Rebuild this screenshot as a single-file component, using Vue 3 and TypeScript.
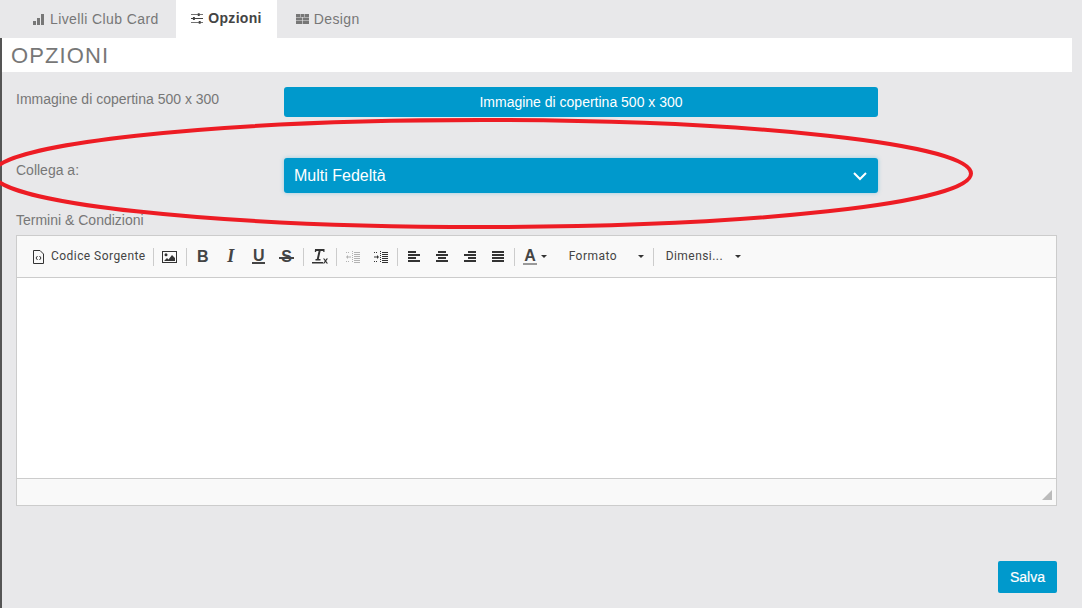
<script setup lang="ts">
</script>

<template>
  <div class="page">
    <nav class="tabs">
      <div class="tab first-tab">
        <svg width="13" height="11" viewBox="0 0 13 11"><path fill="#777" d="M1 7h3v4H1zM5 4h3v7H5zM9 0h3v11H9z" /></svg>
        <span>Livelli Club Card</span>
      </div>
      <div class="tab active">
        <svg width="13" height="11" viewBox="0 0 13 11"><path fill="#444" d="M0 1h7V0h2v1h4v1H9v1H7V2H0zM0 5h2V4h2v1h9v1H4v1H2V6H0zM0 9h8V8h2v1h3v1h-3v1H8v-1H0z" /></svg>
        <span>Opzioni</span>
      </div>
      <div class="tab last-tab">
        <svg width="13" height="10" viewBox="0 0 13 10"><path fill="#777" d="M0 0h4v3H0zM4.500 0h4v3h-4zM9 0h4v3H9zM0 3.600h6.200v2.800H0zM6.800 3.600H13v2.800H6.800zM0 7h6.200v3H0zM6.800 7H13v3H6.800z" /></svg>
        <span>Design</span>
      </div>
    </nav>

    <main class="panel">
      <h1 class="title">OPZIONI</h1>

      <div class="form">
        <svg class="ring" width="1000" height="116" viewBox="0 0 1000 116">
          <ellipse cx="491" cy="57.500" rx="489" ry="53.500" fill="none" stroke="#ed1c24" stroke-width="4" />
        </svg>

        <div class="row first">
          <label class="lbl">Immagine di copertina 500 x 300</label>
          <button class="cover">Immagine di copertina 500 x 300</button>
        </div>

        <div class="row second">
          <label class="lbl">Collega a:</label>
          <div class="select">
            <span>Multi Fedeltà</span>
            <svg width="14" height="9" viewBox="0 0 14 9"><path d="M1 1l6 6 6-6" fill="none" stroke="#fff" stroke-width="2" /></svg>
          </div>
        </div>

        <label class="lbl terms">Termini &amp; Condizioni</label>

        <section class="editor">
          <div class="toolbar">
            <span class="tb source">
              <svg width="11" height="14" viewBox="0 0 11 14"><path fill="none" stroke="#333" d="M.5.500h6.500l3.500 3.500v9.500H.5z" /><path fill="none" stroke="#333" d="M4.500 6L3 8l1.500 2M6.500 6L8 8l-1.500 2" /></svg>
              <span class="lift">Codice Sorgente</span>
            </span>
            <i class="sep"></i>
            <span class="tb ic">
              <svg width="15" height="12" viewBox="0 0 15 12"><path fill="#333" fill-rule="evenodd" d="M0 0h15v12H0zM1 1v10h13V1z" /><circle cx="4" cy="3.800" r="1.500" fill="#333" /><path fill="#333" d="M2 10l3-3 1.500 1.500L10 4l3 3v3z" /></svg>
            </span>
            <i class="sep"></i>
            <span class="tb ic glyph">B</span>
            <span class="tb ic glyph it">I</span>
            <span class="tb ic glyph"><span class="u">U</span></span>
            <span class="tb ic glyph"><span class="s">S</span></span>
            <i class="sep"></i>
            <span class="tb ic">
              <svg width="16" height="15" viewBox="0 0 16 15"><path fill="#333" d="M3 0h9.500v3h-1l-.5-1H8.600L6.800 10H8.500v1.500H3.500V10h1.300L6.600 2H4.500L3.800 3h-1zM0 13h11v1.500H0zM11 9.500h1.400l1 1.500 1-1.500H16L14.200 12l1.800 2.500h-1.500l-1-1.600-1.100 1.600h-1.500l1.900-2.500z" /></svg>
            </span>
            <i class="sep"></i>
            <span class="tb ic muted">
              <svg width="14" height="12" viewBox="0 0 14 12"><path fill="#333" d="M6 0h1v1H6zM6 2h1v1H6zM6 4h1v1H6zM6 6h1v1H6zM6 8h1v1H6zM6 10h1v1H6zM8 1h6v1H8zM8 3h6v1H8zM8 5h6v1H8zM8 7h6v1H8zM8 9h6v1H8zM8 11h6v1H8zM5 5.500H2V4L0 6l2 2V6.500h3zM0 1h1v1H0zM2 1h1v1H2zM0 10h1v1H0zM2 10h1v1H2z" /></svg>
            </span>
            <span class="tb ic">
              <svg width="14" height="12" viewBox="0 0 14 12"><path fill="#333" d="M6 0h1v1H6zM6 2h1v1H6zM6 4h1v1H6zM6 6h1v1H6zM6 8h1v1H6zM6 10h1v1H6zM8 1h6v1H8zM8 3h6v1H8zM8 5h6v1H8zM8 7h6v1H8zM8 9h6v1H8zM8 11h6v1H8zM0 5.500h3V4l2 2-2 2V6.500H0zM0 1h1v1H0zM2 1h1v1H2zM0 10h1v1H0zM2 10h1v1H2z" /></svg>
            </span>
            <i class="sep"></i>
            <span class="tb ic">
              <svg width="12" height="11" viewBox="0 0 12 11"><path fill="#333" d="M0 0h8v2H0zM0 3h12v2H0zM0 6h8v2H0zM0 9h12v2H0z" /></svg>
            </span>
            <span class="tb ic">
              <svg width="12" height="11" viewBox="0 0 12 11"><path fill="#333" d="M2 0h8v2H2zM0 3h12v2H0zM2 6h8v2H2zM0 9h12v2H0z" /></svg>
            </span>
            <span class="tb ic">
              <svg width="12" height="11" viewBox="0 0 12 11"><path fill="#333" d="M4 0h8v2H4zM0 3h12v2H0zM4 6h8v2H4zM0 9h12v2H0z" /></svg>
            </span>
            <span class="tb ic">
              <svg width="12" height="11" viewBox="0 0 12 11"><path fill="#333" d="M0 0h12v2H0zM0 3h12v2H0zM0 6h12v2H0zM0 9h12v2H0z" /></svg>
            </span>
            <i class="sep"></i>
            <span class="tb color">
              <span class="letter">A</span>
              <i class="caret"></i>
            </span>
            <span class="tb drop format">
              <span class="lift">Formato</span>
              <i class="caret"></i>
            </span>
            <i class="sep"></i>
            <span class="tb drop size">
              <span class="lift">Dimensi...</span>
              <i class="caret"></i>
            </span>
          </div>
          <div class="content"></div>
          <div class="status">
            <svg width="10" height="10" viewBox="0 0 10 10"><path fill="#bbb" d="M10 0v10H0z" /></svg>
          </div>
        </section>

        <div class="actions">
          <button class="save">Salva</button>
        </div>
      </div>
    </main>
  </div>
</template>

<style>
html, body { margin: 0; background: #e8e8ea; }
</style>

<style scoped>
.page {
  width: 1082px;
  height: 608px;
  overflow: hidden;
  background: #e8e8ea;
  font-family: "Liberation Sans", Arial, sans-serif;
  color: #777;
}
.tabs {
  display: flex;
  height: 38px;
  padding-left: 16px;
}
.tab {
  display: flex;
  align-items: center;
  gap: 5px;
  padding: 0 15px;
  font-size: 14px;
  letter-spacing: 0.4px;
  color: #777;
}
.first-tab { padding: 0 17px 0 16px; }
.last-tab { padding-left: 19px; }
.tab.active {
  background: #fff;
  color: #444;
  font-weight: 700;
  letter-spacing: 0.3px;
  padding: 0 15px 2px;
  width: 101px;
  box-sizing: border-box;
}
.panel {
  height: 570px;
  border-left: 2px solid #555;
  box-sizing: border-box;
}
.title {
  margin: 0 10px 0 0;
  height: 34px;
  padding-left: 9px;
  background: #fff;
  font-size: 22px;
  line-height: 35px;
  font-weight: 400;
  letter-spacing: 1.1px;
  color: #777;
}
.form {
  position: relative;
  padding: 15px 25px 0 14px;
}
.ring {
  position: absolute;
  top: 44px;
  left: -11px;
  pointer-events: none;
  z-index: 2;
}
.row {
  display: flex;
  align-items: flex-start;
}
.first { height: 71px; }
.second { height: 62px; }
.lbl {
  display: block;
  width: 268px;
  font-size: 14px;
  line-height: 20px;
  color: #777;
  padding-top: 2px;
  box-sizing: border-box;
}
.cover {
  width: 594px;
  height: 30px;
  border: 0;
  border-radius: 3px;
  background: #0099cc;
  color: #fff;
  font: 14px "Liberation Sans", Arial, sans-serif;
  padding: 0;
}
.select {
  width: 594px;
  height: 35px;
  box-sizing: border-box;
  padding: 2px 11px 0 10px;
  display: flex;
  align-items: center;
  justify-content: space-between;
  border-radius: 3px;
  background: #0099cc;
  box-shadow: 0 0 4px rgba(0, 153, 204, 0.35);
  color: #fff;
  font-size: 16px;
}
.select span { margin-top: -2px; }
.terms {
  width: auto;
  margin-top: -10px;
  padding-top: 0;
  height: 25px;
}
.editor {
  width: 1041px;
  height: 271px;
  box-sizing: border-box;
  border: 1px solid #ccc;
  display: flex;
  flex-direction: column;
  background: #fff;
}
.toolbar {
  height: 42px;
  flex: none;
  box-sizing: border-box;
  background: #f9f9f9;
  border-bottom: 1px solid #ccc;
  display: flex;
  align-items: center;
  padding-left: 15px;
  font-family: Roboto, sans-serif;
  font-size: 12px;
  letter-spacing: 0.45px;
  color: #444;
}
.tb {
  display: inline-flex;
  align-items: center;
  justify-content: center;
  height: 20px;
}
.lift { margin-top: -1px; }
.source { gap: 7px; margin-left: 1px; margin-right: 5px; }
.ic { width: 28px; }
.sep {
  width: 1px;
  height: 18px;
  margin: 0 2px;
  background: #ccc;
  flex: none;
}
.glyph {
  font-size: 16px;
  font-family: "Liberation Sans", sans-serif;
  font-weight: 700;
  color: #444;
  letter-spacing: 0;
}
.it { font-family: "Liberation Serif", serif; font-style: italic; font-size: 18px; }
.u {
  border-bottom: 2px solid #444;
  line-height: 13px;
  padding: 0 1px;
}
.s { position: relative; padding: 0 1px; }
.s::after {
  content: "";
  position: absolute;
  left: -1px;
  right: -1px;
  top: 9px;
  height: 2px;
  background: #444;
}
.muted { opacity: 0.35; }
.color { width: 33px; gap: 4px; padding-left: 4px; box-sizing: border-box; }
.letter {
  font-family: "Liberation Sans", sans-serif;
  font-size: 16px;
  font-weight: 700;
  color: #444;
  border-bottom: 2px solid #999;
  line-height: 15px;
  padding: 0 1px;
}
.caret {
  width: 0;
  height: 0;
  border-left: 3px solid transparent;
  border-right: 3px solid transparent;
  border-top: 3px solid #333;
}
.drop { justify-content: space-between; box-sizing: border-box; }
.format { width: 94px; padding-left: 18px; padding-right: 1px; margin-left: 1px; margin-right: 6px; }
.size { width: 85px; padding-left: 10px; padding-right: 0; }
.content { flex: 1; background: #fff; }
.status {
  height: 27px;
  flex: none;
  background: #f9f9f9;
  border-top: 1px solid #ccc;
  display: flex;
  justify-content: flex-end;
  align-items: flex-end;
  padding: 0 4px 5px 0;
  box-sizing: border-box;
}
.actions {
  display: flex;
  justify-content: flex-end;
  margin-top: 55px;
  width: 1041px;
}
.save {
  width: 59px;
  height: 32px;
  border: 0;
  border-radius: 2px;
  background: #0099cc;
  color: #fff;
  font: 14px "Liberation Sans", Arial, sans-serif;
  -webkit-text-stroke: 0.2px #fff;
  padding: 0;
}
</style>
